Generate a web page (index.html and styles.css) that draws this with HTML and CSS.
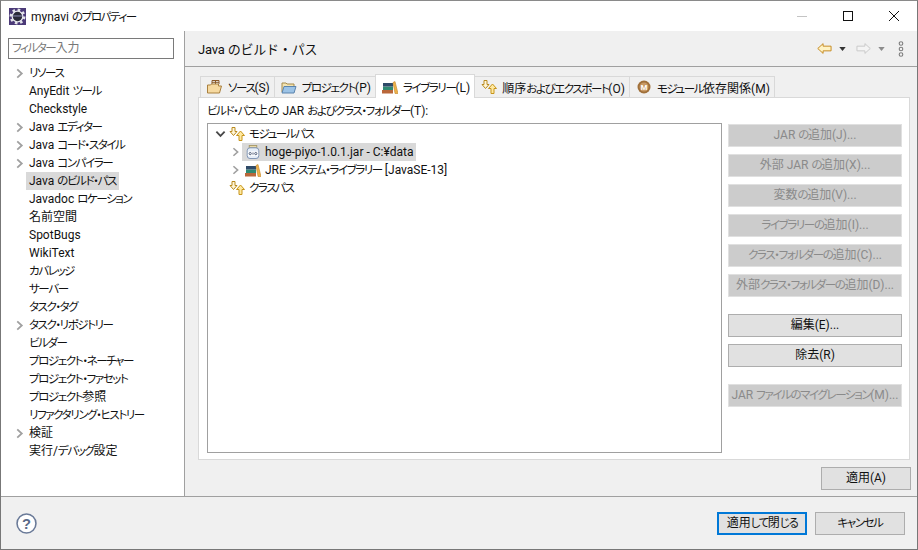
FILE: index.html
```html
<!DOCTYPE html>
<html lang="ja">
<head>
<meta charset="utf-8">
<title>mynavi のプロパティー</title>
<link rel="stylesheet" href="styles.css">
</head>
<body>
<svg class="defs" width="0" height="0" aria-hidden="true">
  <defs>
    <symbol id="chev-r" viewBox="0 0 10 12"><path d="M2.500 1.500 7.500 6 2.500 10.500" fill="none" stroke="#a0a0a0" stroke-width="2"/></symbol>
    <symbol id="chev-d" viewBox="0 0 12 10"><path d="M1.500 2.500 6 7 10.500 2.500" fill="none" stroke="#484848" stroke-width="2"/></symbol>
    <symbol id="updown" viewBox="0 0 16 14">
      <path d="M3 .5h3v4h2L4.500 8.500 1 4.500h2z" fill="#fff6d8" stroke="#b98a1e"/>
      <path d="M10 13.500v-5H7.500L11.500 4l4 4.500H13v5z" fill="#ffe9a0" stroke="#c7951c"/>
    </symbol>
    <symbol id="books" viewBox="0 0 16 14">
      <rect x="0" y="10" width="11" height="3.500" fill="#b9673a"/>
      <rect x="1" y="6.500" width="10" height="3.500" fill="#2f8a72"/>
      <rect x="1" y="3" width="10" height="3.500" fill="#2f4a68"/>
      <path d="M11 2.500 13 1.500 16 13.500H13z" fill="#eeb24a" stroke="#c5872a" stroke-width=".6"/>
    </symbol>
  </defs>
</svg>
<div class="window">
  <header class="titlebar">
    <svg class="app-icon" viewBox="0 0 16 16" aria-hidden="true">
      <rect width="16" height="16" fill="#4b3a78"/>
      <circle cx="8" cy="8" r="6.300" fill="none" stroke="#e4e4ea" stroke-width="2.400" stroke-dasharray="2.400 2.540"/>
      <circle cx="8" cy="8" r="5" fill="#2a2a38" stroke="#e8e8ee" stroke-width="1.200"/>
      <path d="M3.500 7.500h9" stroke="#8888b0"/>
    </svg>
    <span class="title-text">mynavi <span class="k">のプロパティー</span></span>
    <div class="win-controls">
      <svg class="win-btn" viewBox="0 0 12 12" aria-hidden="true"><path d="M1 6.500h10" stroke="#c4c4c4"/></svg>
      <svg class="win-btn" viewBox="0 0 12 12" aria-hidden="true"><rect x="1.500" y="1.500" width="9" height="9" fill="none" stroke="#111"/></svg>
      <svg class="win-btn" viewBox="0 0 12 12" aria-hidden="true"><path d="M1 1l10 10M11 1 1 11" stroke="#111" fill="none"/></svg>
    </div>
  </header>
  <div class="main">
    <aside class="sidebar">
      <div class="filter"><span class="k">フィルター</span>入力</div>
      <ul class="nav">
        <li class="nav-row"><svg class="nav-chev"><use href="#chev-r"/></svg><span class="label"><span class="k">リソース</span></span></li>
        <li class="nav-row"><span class="label">AnyEdit <span class="k">ツール</span></span></li>
        <li class="nav-row"><span class="label">Checkstyle</span></li>
        <li class="nav-row"><svg class="nav-chev"><use href="#chev-r"/></svg><span class="label">Java <span class="k">エディター</span></span></li>
        <li class="nav-row"><svg class="nav-chev"><use href="#chev-r"/></svg><span class="label">Java <span class="k">コード・スタイル</span></span></li>
        <li class="nav-row"><svg class="nav-chev"><use href="#chev-r"/></svg><span class="label">Java <span class="k">コンパイラー</span></span></li>
        <li class="nav-row"><span class="label selected">Java <span class="k">のビルド・パス</span></span></li>
        <li class="nav-row"><span class="label">Javadoc <span class="k">ロケーション</span></span></li>
        <li class="nav-row"><span class="label">名前空間</span></li>
        <li class="nav-row"><span class="label">SpotBugs</span></li>
        <li class="nav-row"><span class="label">WikiText</span></li>
        <li class="nav-row"><span class="label"><span class="k">カバレッジ</span></span></li>
        <li class="nav-row"><span class="label"><span class="k">サーバー</span></span></li>
        <li class="nav-row"><span class="label"><span class="k">タスク・タグ</span></span></li>
        <li class="nav-row"><svg class="nav-chev"><use href="#chev-r"/></svg><span class="label"><span class="k">タスク・リポジトリー</span></span></li>
        <li class="nav-row"><span class="label"><span class="k">ビルダー</span></span></li>
        <li class="nav-row"><span class="label"><span class="k">プロジェクト・ネーチャー</span></span></li>
        <li class="nav-row"><span class="label"><span class="k">プロジェクト・ファセット</span></span></li>
        <li class="nav-row"><span class="label"><span class="k">プロジェクト</span>参照</span></li>
        <li class="nav-row"><span class="label"><span class="k">リファクタリング・ヒストリー</span></span></li>
        <li class="nav-row"><svg class="nav-chev"><use href="#chev-r"/></svg><span class="label">検証</span></li>
        <li class="nav-row"><span class="label">実行/<span class="k">デバッグ</span>設定</span></li>
      </ul>
    </aside>
    <section class="content">
      <div class="content-head">
        <h1 class="page-title">Java のビルド・パス</h1>
        <div class="head-tools">
          <svg class="arrow" viewBox="0 0 16 12" aria-hidden="true"><path d="M.800 6 6.500 .800V3.500H15V8.500H6.500V11.200z" fill="#fff3c4" stroke="#c4861a"/></svg>
          <svg class="drop" viewBox="0 0 8 5" aria-hidden="true"><path d="M0 0h8L4 5z" fill="#333"/></svg>
          <svg class="arrow arrow-off" viewBox="0 0 16 12" aria-hidden="true"><path d="M15.200 6 9.500 .800V3.500H1V8.500H9.500V11.200z" fill="#f4f4f4" stroke="#c8c8c8"/></svg>
          <svg class="drop" viewBox="0 0 8 5" aria-hidden="true"><path d="M0 0h8L4 5z" fill="#8c8c8c"/></svg>
          <svg class="dots" viewBox="0 0 6 16" aria-hidden="true"><g fill="#f0f0f0" stroke="#7c7c7c" stroke-width="1.100"><circle cx="3" cy="2.500" r="1.800"/><circle cx="3" cy="8" r="1.800"/><circle cx="3" cy="13.500" r="1.800"/></g></svg>
        </div>
      </div>
      <div class="pane">
        <div class="tabs">
          <div class="tab">
            <svg class="tab-icon" viewBox="0 0 16 14" aria-hidden="true"><path d="M5 4V.500h7V4M8.500 .500V4M5 2.300h7" fill="none" stroke="#8a5a2a"/><path d="M.500 13V5h3l1-1h7v2h3l-2 7z" fill="#f6d9a0" stroke="#a9803f"/></svg>
            <span><span class="k">ソース</span>(S)</span>
          </div>
          <div class="tab">
            <svg class="tab-icon" viewBox="0 0 16 14" aria-hidden="true"><path d="M1 12V3h4l1 1h7v3" fill="#f3e3b0" stroke="#a58a4a"/><path d="M1 13 3 6.500h12L13 13z" fill="#9cc3e6" stroke="#5a83ad"/></svg>
            <span><span class="k">プロジェクト</span>(P)</span>
          </div>
          <div class="tab tab-active">
            <svg class="tab-icon"><use href="#books"/></svg>
            <span><span class="k">ライブラリー</span>(L)</span>
          </div>
          <div class="tab">
            <svg class="tab-icon"><use href="#updown"/></svg>
            <span>順序<span class="k">およびエクスポート</span>(O)</span>
          </div>
          <div class="tab">
            <svg class="tab-icon tab-icon-m" viewBox="0 0 14 14" aria-hidden="true"><circle cx="7" cy="7" r="6.500" fill="#a0703a"/><circle cx="7" cy="7" r="4.500" fill="#c99a66"/><text x="7" y="10" text-anchor="middle" class="m-glyph">M</text></svg>
            <span><span class="k">モジュール</span>依存関係(M)</span>
          </div>
        </div>
        <div class="panel">
          <div class="panel-label"><span class="k">ビルド・パス</span>上の JAR <span class="k">およびクラス・フォルダー</span>(T):</div>
          <div class="panel-body">
            <div class="tree">
              <div class="tree-row"><svg class="tw"><use href="#chev-d"/></svg><svg class="ti ti-root"><use href="#updown"/></svg><span class="k tt">モジュールパス</span></div>
              <div class="tree-row lvl2 tree-sel"><svg class="tw tw-sel"><use href="#chev-r"/></svg><span class="sel-wrap"><svg class="ti" viewBox="0 0 14 15" aria-hidden="true"><rect x="3" y=".500" width="8" height="2.500" fill="#e9d9a8" stroke="#a89a6a"/><rect x=".800" y="3" width="12.400" height="11.500" rx="3" fill="#e6eef8" stroke="#7a8fb0"/><rect x="1.500" y="7" width="11" height="4.500" fill="#fff"/><g fill="none" stroke="#3a4a6a" stroke-width=".9"><circle cx="4" cy="9.200" r="1.200"/><path d="M7 8v2.400"/><circle cx="10" cy="9.200" r="1.200"/></g></svg><span>hoge-piyo-1.0.1.jar - C:¥data</span></span></div>
              <div class="tree-row lvl2"><svg class="tw"><use href="#chev-r"/></svg><svg class="ti"><use href="#books"/></svg><span class="tt">JRE <span class="k">システム・ライブラリー</span> [JavaSE-13]</span></div>
              <div class="tree-row"><span class="tw"></span><svg class="ti ti-root"><use href="#updown"/></svg><span class="k tt">クラスパス</span></div>
            </div>
            <div class="side-btns">
              <div class="btn off">JAR <span class="k">の</span>追加(J)...</div>
              <div class="btn off">外部 JAR <span class="k">の</span>追加(X)...</div>
              <div class="btn off">変数<span class="k">の</span>追加(V)...</div>
              <div class="btn off"><span class="k">ライブラリーの</span>追加(I)...</div>
              <div class="btn off"><span class="k">クラス・フォルダーの</span>追加(C)...</div>
              <div class="btn off">外部<span class="k">クラス・フォルダーの</span>追加(D)...</div>
              <div class="btn gap">編集(E)...</div>
              <div class="btn">除去(R)</div>
              <div class="btn off gap">JAR <span class="k">ファイルのマイグレーション</span>(M)...</div>
            </div>
          </div>
        </div>
        <div class="apply-row"><div class="btn wide">適用(A)</div></div>
      </div>
    </section>
  </div>
  <footer class="footer">
    <svg class="help" viewBox="0 0 20 20" aria-hidden="true"><circle cx="10" cy="10" r="9" fill="#fff" stroke="#6a7a98" stroke-width="1.500"/><text x="10" y="15" text-anchor="middle" class="help-q">?</text></svg>
    <div class="footer-btns">
      <div class="btn wide primary">適用<span class="k">して</span>閉<span class="k">じる</span></div>
      <div class="btn wide"><span class="k">キャンセル</span></div>
    </div>
  </footer>
</div>
</body>
</html>
```

FILE: styles.css
```css
* { box-sizing: border-box; }
html, body { margin: 0; padding: 0; height: 100%; }
body {
  font-family: Roboto, "Noto Sans CJK JP", sans-serif;
  font-size: 12px;
  font-feature-settings: "palt";
  color: #111;
  background: #fff;
  overflow: hidden;
}
.k { font-size: 11.500px; letter-spacing: -1.400px; }
.defs { display: block; height: 0; }
.window {
  width: 918px;
  height: 550px;
  border: 1px solid #777;
  border-top-color: #8a8a8a;
  display: flex;
  flex-direction: column;
  background: #f0f0f0;
}
.titlebar {
  height: 30px;
  background: #fff;
  display: flex;
  align-items: center;
  padding-left: 8px;
  flex: none;
}
.app-icon { width: 17px; height: 17px; margin-right: 5px; }
.title-text { flex: 1; }
.win-controls { display: flex; }
.win-btn { width: 12px; height: 12px; margin: 0 17px; }
.main { flex: 1; display: flex; min-height: 0; }
.sidebar {
  width: 184px;
  background: #fff;
  border-right: 1px solid #a0a0a0;
  padding: 7px 0 0 7px;
  flex: none;
}
.filter {
  width: 166px;
  height: 21px;
  border: 1px solid #7a7a7a;
  padding-left: 3px;
  line-height: 19px;
  color: #777;
}
.nav { list-style: none; margin: 5px 0 0; padding: 0; }
.nav-row {
  position: relative;
  height: 18px;
  line-height: 18px;
  padding-left: 18px;
  white-space: nowrap;
}
.label { display: inline-block; padding: 0 3px; height: 18px; }
.selected { background: #d9d9d9; }
.nav-chev { position: absolute; left: 7px; top: 4px; width: 9px; height: 11px; }
.content { flex: 1; display: flex; flex-direction: column; min-width: 0; }
.content-head {
  height: 36px;
  border-bottom: 1px solid #a0a0a0;
  display: flex;
  align-items: center;
  padding: 0 13px 0 13px;
  flex: none;
}
.page-title {
  flex: 1;
  margin: 0;
  font-size: 13px;
  font-weight: 400;
  font-feature-settings: normal;
  letter-spacing: -.2px;
}
.head-tools { display: flex; align-items: center; }
.arrow { width: 15px; height: 13px; }
.drop { width: 7px; height: 4px; margin: 0 8px 0 7px; }
.arrow-off { margin-left: 2px; }
.dots { width: 6px; height: 16px; margin-left: 5px; }
.pane {
  flex: 1;
  padding: 8px 7px 0 13px;
  display: flex;
  flex-direction: column;
  min-height: 0;
}
.tabs { display: flex; height: 22px; flex: none; position: relative; padding-left: 2px; }
.tab {
  display: flex;
  align-items: center;
  height: 21px;
  margin-top: 1px;
  padding: 0 4px 0 6px;
  border: 1px solid #d9d9d9;
  border-bottom: 0;
  margin-right: -1px;
  white-space: nowrap;
}
.tab-active {
  height: 24px;
  margin-top: -1px;
  background: #fff;
  position: relative;
  z-index: 1;
}
.tab-icon { width: 16px; height: 14px; margin-right: 5px; }
.m-glyph { font: 700 7.500px Roboto, sans-serif; fill: #fff; }
.panel {
  height: 363px;
  background: #fff;
  border: 1px solid #d9d9d9;
  padding: 5px 8px 6px 8px;
  flex: none;
  display: flex;
  flex-direction: column;
}
.panel-label { height: 16px; line-height: 16px; margin-bottom: 4px; white-space: nowrap; }
.panel-body { flex: 1; display: flex; min-height: 0; }
.tree {
  width: 515px;
  border: 1px solid #a0a0a0;
  padding-top: 1px;
  flex: none;
}
.tree-row {
  display: flex;
  align-items: center;
  height: 18px;
  padding-left: 7px;
  white-space: nowrap;
}
.tt { margin-bottom: 2px; }
.lvl2 { padding-left: 22px; }
.tw { width: 11px; height: 10px; flex: none; margin-right: 4px; }
.tw-sel { margin-right: 1px; }
.ti { width: 16px; height: 14px; flex: none; margin-right: 4px; }
.ti-root { margin-left: -1px; margin-right: 4px; }
.sel-wrap {
  display: flex;
  align-items: center;
  background: #d9d9d9;
  height: 18px;
  padding: 0 2px 0 3px;
}
.side-btns {
  margin-left: 6px;
  width: 174px;
  flex: none;
  display: flex;
  flex-direction: column;
  gap: 7px;
  padding-top: 1px;
}
.btn {
  height: 23px;
  line-height: 21px;
  text-align: center;
  background: #e1e1e1;
  border: 1px solid #adadad;
  white-space: nowrap;
}
.btn.off {
  background: #cccccc;
  border-color: #e0e0e0;
  color: #8a8a8a;
}
.btn.gap { margin-top: 10px; }
.btn.wide { width: 90px; }
.apply-row {
  display: flex;
  justify-content: flex-end;
  padding: 7px 0 0;
  margin-right: -1px;
}
.footer {
  height: 53px;
  border-top: 1px solid #a0a0a0;
  display: flex;
  align-items: center;
  justify-content: space-between;
  padding: 0 12px 0 15px;
  flex: none;
}
.help { width: 21px; height: 21px; }
.help-q { font: 700 14px "Liberation Sans", sans-serif; fill: #5a6a88; }
.footer-btns { display: flex; gap: 8px; }
.primary { border: 2px solid #0078d7; line-height: 19px; }
```
